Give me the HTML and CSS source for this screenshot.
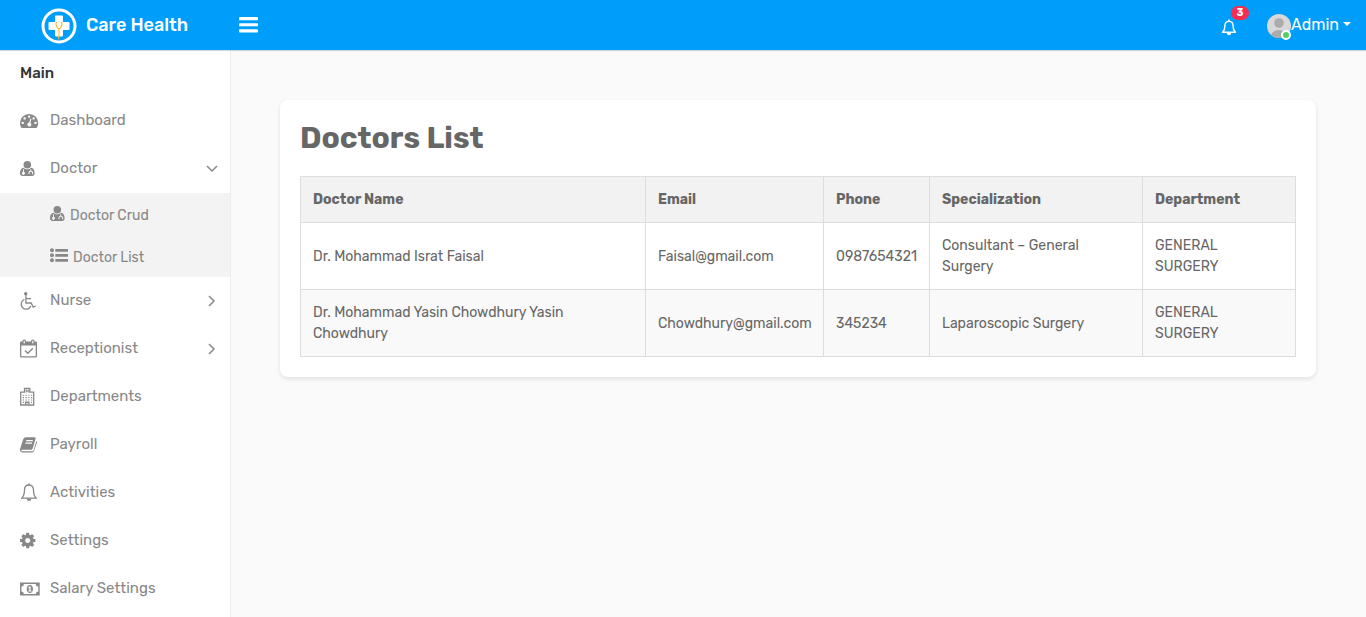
FILE: index.html
```html
<!DOCTYPE html>
<html lang="en">
<head>
<meta charset="utf-8">
<title>Care Health</title>
<link rel="stylesheet" href="styles.css">
</head>
<body>
<svg class="defs" aria-hidden="true">
  <symbol id="user-md" viewBox="0 0 15 15">
    <circle cx="7.3" cy="3.8" r="3.8"/>
    <path fill-rule="evenodd" d="M3.600 6.800C1.200 7.200 0 9.200 0 12.200 0 14 1 15 2.700 15H12c1.700 0 2.600-1 2.600-2.800 0-3-1.200-5-3.600-5.400-2 2-5.400 2-7.400 0ZM3 8.300h.9v2.500a1.500 1.500 0 1 1-.9 0ZM10.300 8.300h.9v1.500c1.300.2 1.900 1 1.900 2.100v1.300h-1V12c0-.8-.5-1.200-1.300-1.200S9.500 11.200 9.500 12v1.200h-1V12c0-1.200.7-2 1.800-2.200Z"/>
  </symbol>
</svg>
<header class="header">
  <a class="brand">
    <svg class="logo" viewBox="0 0 36 36">
      <circle cx="18" cy="18" r="16" fill="none" stroke="#fff" stroke-width="3"/>
      <path d="M15 7.500h6q1 0 1 1V14h5.500q1 0 1 1v6q0 1-1 1H22v5.500q0 1-1 1h-6q-1 0-1-1V22H8.500q-1 0-1-1v-6q0-1 1-1H14V8.500q0-1 1-1Z" fill="#fff"/>
      <path d="M16 14.500h-.7c-.8 1 .1 5.500 2.700 6.500 2.600-1 3.600-5.500 2.700-6.500H20M18 21v4.500l-.4 6" fill="none" stroke="#fbb52c" stroke-width="1.100"/>
    </svg>
    <span class="brand-name">Care Health</span>
  </a>
  <svg class="bars" viewBox="0 0 18 16"><path d="M.8 1h16.400q.8 0 .8.800v1.400q0 .8-.8.800H.8Q0 4 0 3.200V1.800Q0 1 .8 1ZM.8 6.700h16.400q.8 0 .8.800v1.400q0 .8-.8.800H.8Q0 9.700 0 8.900V7.500q0-.8.800-.8ZM.8 12.500h16.400q.8 0 .8.800v1.400q0 .8-.8.800H.8q-.8 0-.8-.8v-1.400q0-.8.800-.8Z"/></svg>
  <div class="user-menu">
    <a class="notify">
      <svg class="bell" viewBox="0 0 16 17"><path d="M8 2.200C5.200 2.200 3.900 4.300 3.900 6.800c0 3.500-.9 5.300-2.400 6.500h13c-1.500-1.200-2.400-3-2.400-6.500 0-2.500-1.300-4.600-4.100-4.600Z" fill="none" stroke="currentColor" stroke-width="1.400" stroke-linejoin="round"/><path d="M7.300.5h1.400v2H7.300ZM5.800 14h4.400a2.200 2.200 0 0 1-4.400 0Z"/></svg>
      <span class="badge">3</span>
    </a>
    <a class="user">
      <span class="avatar"><svg viewBox="0 0 24 24"><clipPath id="round"><circle cx="12" cy="12" r="12"/></clipPath><g clip-path="url(#round)"><path fill="#d8d8d8" d="M0 0h24v24H0z"/><circle cx="12" cy="9" r="4.800" fill="#ababab"/><ellipse cx="12" cy="22" rx="8" ry="6" fill="#ababab"/></g></svg><span class="status"></span></span>
      <span class="user-name">Admin</span>
      <span class="caret"></span>
    </a>
  </div>
</header>
<div class="layout">
  <nav class="sidebar">
    <div class="menu-title">Main</div>
    <a class="item"><svg viewBox="0 0 20 20" class="icon"><path fill-rule="evenodd" d="M9.100 3A9 9 0 0 0 0 12c0 1.800.5 3.300 1.300 4.500q.3.500.8.500h14q.5 0 .8-.5c.8-1.200 1.300-2.700 1.300-4.500A9 9 0 0 0 9.100 3ZM9.100 4.400a1.200 1.200 0 1 1 0 2.400 1.200 1.200 0 0 1 0-2.400ZM4.600 6.200a1.200 1.200 0 1 1 0 2.400 1.200 1.200 0 0 1 0-2.400ZM13.600 6.200a1.200 1.200 0 1 1 0 2.400 1.200 1.200 0 0 1 0-2.400ZM2.700 10.700a1.200 1.200 0 1 1 0 2.400 1.200 1.200 0 0 1 0-2.400ZM15.500 10.700a1.200 1.200 0 1 1 0 2.400 1.200 1.200 0 0 1 0-2.400ZM10.400 7.400l1 .3-1 4.200a2 2 0 1 1-1.200-.3Z"/></svg>Dashboard</a>
    <a class="item open"><svg class="icon icon-md"><use href="#user-md"/></svg>Doctor<svg class="arrow" viewBox="0 0 12 12"><path d="m1 4 5 5 5-5"/></svg></a>
    <div class="submenu">
      <a class="subitem"><svg class="icon-md"><use href="#user-md"/></svg>Doctor Crud</a>
      <a class="subitem"><svg class="icon-list" viewBox="0 0 18 15"><circle cx="2" cy="2.200" r="2"/><circle cx="2" cy="7.200" r="2"/><circle cx="2" cy="12.300" r="2"/><path d="M5.300.9H18v2.800H5.300ZM5.300 5.900H18v2.800H5.300ZM5.300 10.900H18v2.800H5.300Z"/></svg>Doctor List</a>
    </div>
    <a class="item"><svg viewBox="0 0 20 20" class="icon"><circle cx="5.700" cy="2.800" r="1.700"/><path d="M5.900 4v8h5.300l2 4.200 2.600-1.200M6 7.700h5M4.300 8.500A5 5 0 1 0 10.800 15" fill="none" stroke="currentColor" stroke-width="1.300"/></svg>Nurse<svg class="arrow" viewBox="0 0 12 12"><path d="m4 1 5 5-5 5"/></svg></a>
    <a class="item"><svg viewBox="0 0 20 20" class="icon"><path fill-rule="evenodd" d="M1.300 2.500h14.400q1.300 0 1.300 1.300v13.400q0 1.300-1.300 1.300H1.300Q0 18.500 0 17.200V3.800q0-1.300 1.300-1.300ZM1.300 6.500v10.700h14.400V6.500Z"/><g fill="#fff" stroke="currentColor" stroke-width="1.200"><rect x="3" y="1.100" width="2.400" height="3.900" rx="1.100"/><rect x="11.600" y="1.100" width="2.400" height="3.900" rx="1.100"/></g><path d="m5 11.500 2.800 2.800 5-5" fill="none" stroke="currentColor" stroke-width="1.400"/></svg>Receptionist<svg class="arrow" viewBox="0 0 12 12"><path d="m4 1 5 5-5 5"/></svg></a>
    <a class="item"><svg viewBox="0 0 20 20" class="icon"><path d="M.7 5.200h3.800V1.300h5.300v3.900h3.900V18H.7Z" fill="none" stroke="currentColor" stroke-width="1.300"/><path d="M5.700 2.200h1v1.200h1V2.200h1v3.300h-1V4.400h-1v1.100h-1ZM5 14.500h4.500V18H8.300v-1.700H6.200V18H5Z"/><path d="M2.800 8.200h9.500M2.800 10.600h9.500M2.800 13h9.500M2.800 15.400h1.500M10.800 15.400h1.500" stroke="currentColor" stroke-width="1.100" stroke-dasharray="1.300 1.400"/></svg>Departments</a>
    <a class="item"><svg viewBox="0 0 20 20" class="icon"><path fill-rule="evenodd" d="M6 2.200h8.500q1.600 0 1.100 1.600l-2.900 9.600q-.4 1.300-1.700 1.300H2.100q-1.100 0-.7 1 .2.500 1.200.5h10q.7 0 .9-.7l2.900-9.500q.8.800.4 1.900L14 16q-.4 1.400-1.800 1.400H2.500Q.9 17.400.2 16q-.4-1.200 0-2.500L3.300 4q.7-1.800 2.700-1.800ZM6.300 5 6 6.200h6.600l.3-1.200ZM5.600 7.500l-.3 1.200h6.600l.3-1.200Z"/></svg>Payroll</a>
    <a class="item"><svg viewBox="0 0 20 20" class="icon"><path d="M9 2C6 2 4.500 4.400 4.500 7c0 4.300-1 6.500-2.900 8.200h14.800C14.500 13.500 13.500 11.300 13.500 7c0-2.600-1.500-5-4.500-5Z" fill="none" stroke="currentColor" stroke-width="1.300" stroke-linejoin="round"/><path d="M8.200.4h1.600v2H8.200ZM6.500 15.500h5a2.500 2.500 0 0 1-5 0Z"/></svg>Activities</a>
    <a class="item"><svg viewBox="128 -54 1991 1991" class="icon"><path d="M1152 896q0-106-75-181t-181-75-181 75-75 181 75 181 181 75 181-75 75-181zm512-109v222q0 12-8 23t-20 13l-185 28q-19 54-39 91 35 50 107 138 10 12 10 25t-9 23q-27 37-99 108t-94 71q-12 0-26-9l-138-108q-44 23-91 38-16 136-29 186-7 28-36 28h-222q-14 0-24.500-8.500t-11.500-21.500l-28-184q-49-16-90-37l-141 107q-10 9-25 9-14 0-25-11-126-114-165-168-7-10-7-23 0-12 8-23 15-21 51-66.500t54-70.500q-27-50-41-99l-183-27q-13-2-21-12.500t-8-23.500v-222q0-12 8-23t19-13l186-28q14-46 39-92-40-57-107-138-10-12-10-24 0-10 9-23 26-36 98.500-107.500t94.500-71.500q13 0 26 10l138 107q44-23 91-38 16-136 29-186 7-28 36-28h222q14 0 24.500 8.500t11.500 21.500l28 184q49 16 90 37l142-107q9-9 24-9 13 0 25 10 129 119 165 170 7 8 7 22 0 12-8 23-15 21-51 66.500t-54 70.500q26 50 41 98l183 28q13 2 21 12.500t8 23.500z"/></svg>Settings</a>
    <a class="item"><svg viewBox="0 0 20 20" class="icon"><path fill-rule="evenodd" d="M0 3.500h19.700v13H0ZM3.900 4.900q0 2.500-2.500 2.600v5q2.500.1 2.500 2.600h11.900q0-2.500 2.500-2.600v-5q-2.500-.1-2.500-2.600ZM9.900 6c2 0 3.100 1.900 3.100 4s-1.100 4-3.100 4-3.200-1.900-3.200-4 1.200-4 3.200-4ZM9.500 7.500 8.100 8.700l.6.700.6-.4v2.500h-1v.9h3.200v-.9h-.9v-4Z"/></svg>Salary Settings</a>
  </nav>
  <main class="content">
    <section class="card">
      <h1>Doctors List</h1>
      <table>
        <colgroup><col class="c1"><col class="c2"><col class="c3"><col class="c4"><col class="c5"></colgroup>
        <thead><tr><th>Doctor Name</th><th>Email</th><th>Phone</th><th>Specialization</th><th>Department</th></tr></thead>
        <tbody>
          <tr><td>Dr. Mohammad Israt Faisal</td><td>Faisal@gmail.com</td><td>0987654321</td><td>Consultant – General<br>Surgery</td><td>GENERAL<br>SURGERY</td></tr>
          <tr><td>Dr. Mohammad Yasin Chowdhury Yasin<br>Chowdhury</td><td>Chowdhury@gmail.com</td><td>345234</td><td>Laparoscopic Surgery</td><td>GENERAL<br>SURGERY</td></tr>
        </tbody>
      </table>
    </section>
  </main>
</div>
</body>
</html>
```
FILE: styles.css
```css
* { box-sizing: border-box; }
body { margin: 0; background: #fafafa; color: #666; font: 14px/21px Rubik, Roboto, sans-serif; height: 617px; overflow: hidden; }
svg { fill: currentColor; flex: none; display: block; }
.defs { position: absolute; width: 0; height: 0; }
.header { height: 50px; background: #009efb; color: #fff; display: flex; align-items: center; box-shadow: 0 1px 1px rgba(0,0,0,.15); position: relative; }
.brand { width: 239px; padding-left: 40.5px; display: flex; align-items: center; gap: 9.5px; font-size: 18px; font-weight: 500; }
.logo { width: 36px; height: 36px; margin-top: 1px; }
.bars { width: 19px; height: 17px; margin-bottom: 2px; }
.user-menu { margin-left: auto; padding-right: 15px; display: flex; align-items: center; }
.notify { position: relative; margin-right: 30px; }
.bell { width: 16px; height: 17px; margin-top: 4px; }
.badge { position: absolute; left: 10px; top: -9px; width: 18px; height: 14px; border-radius: 7px; background: #f62d51; font-size: 10.5px; font-weight: 700; line-height: 14px; text-align: center; }
.user { display: flex; align-items: center; font-size: 16px; font-weight: 400; }
.user-name { margin-bottom: 2px; }
.avatar { position: relative; width: 24px; height: 24px; margin-top: 2px; }
.status { position: absolute; right: 0; bottom: -2px; width: 10px; height: 10px; border-radius: 50%; border: 2px solid #fff; background: #55ce63; }
.caret { margin: 0 0 2px 4px; border: 4px solid transparent; border-top-color: #fff; border-bottom: 0; }
.layout { display: flex; height: 567px; }
.sidebar { width: 231px; background: #fff; border-right: 1px solid #eee; color: #888; font-size: 15px; }
.menu-title { height: 46px; padding: 13px 20px 12px; color: #333; font-weight: 500; }
.item { display: flex; align-items: center; height: 48px; padding: 0 13px 0 20px; }
.icon { width: 20px; height: 20px; margin: 1px 10px 0 0; }
.icon-md { width: 15px; height: 15px; }
.item .icon-md { margin-right: 15px; }
.arrow { width: 12px; height: 12px; margin-left: auto; margin-top: 2px; fill: none; stroke: currentColor; stroke-width: 1.5; }
.open { padding-right: 12px; }
.open .arrow { margin-top: 0; }
.submenu { background: #f3f3f3; height: 84px; margin: 1px 0 -1px; }
.subitem { display: flex; align-items: center; height: 42px; padding: 2px 0 0 50px; font-size: 14px; gap: 5px; }
.icon-list { width: 18px; height: 15px; margin-bottom: 3px; }
.subitem .icon-md { margin-bottom: 3px; }
.content { flex: 1; padding: 50px 50px 0 49px; }
.card { height: 277px; padding: 20px; background: #fff; border-radius: 8px; box-shadow: 0 2px 4px rgba(0,0,0,.1); }
h1 { margin: 0 0 20px; font-size: 30px; line-height: 36px; font-weight: 700; }
table { width: 996px; table-layout: fixed; border-collapse: collapse; }
.c1 { width: 345px; } .c2 { width: 178px; } .c3 { width: 106px; } .c4 { width: 213px; } .c5 { width: 153px; }
th, td { padding: 12px; border: 1px solid #ddd; text-align: left; vertical-align: middle; }
th { background: #f2f2f2; font-weight: 700; }
tbody tr:nth-child(even) { background: #f9f9f9; }
```
